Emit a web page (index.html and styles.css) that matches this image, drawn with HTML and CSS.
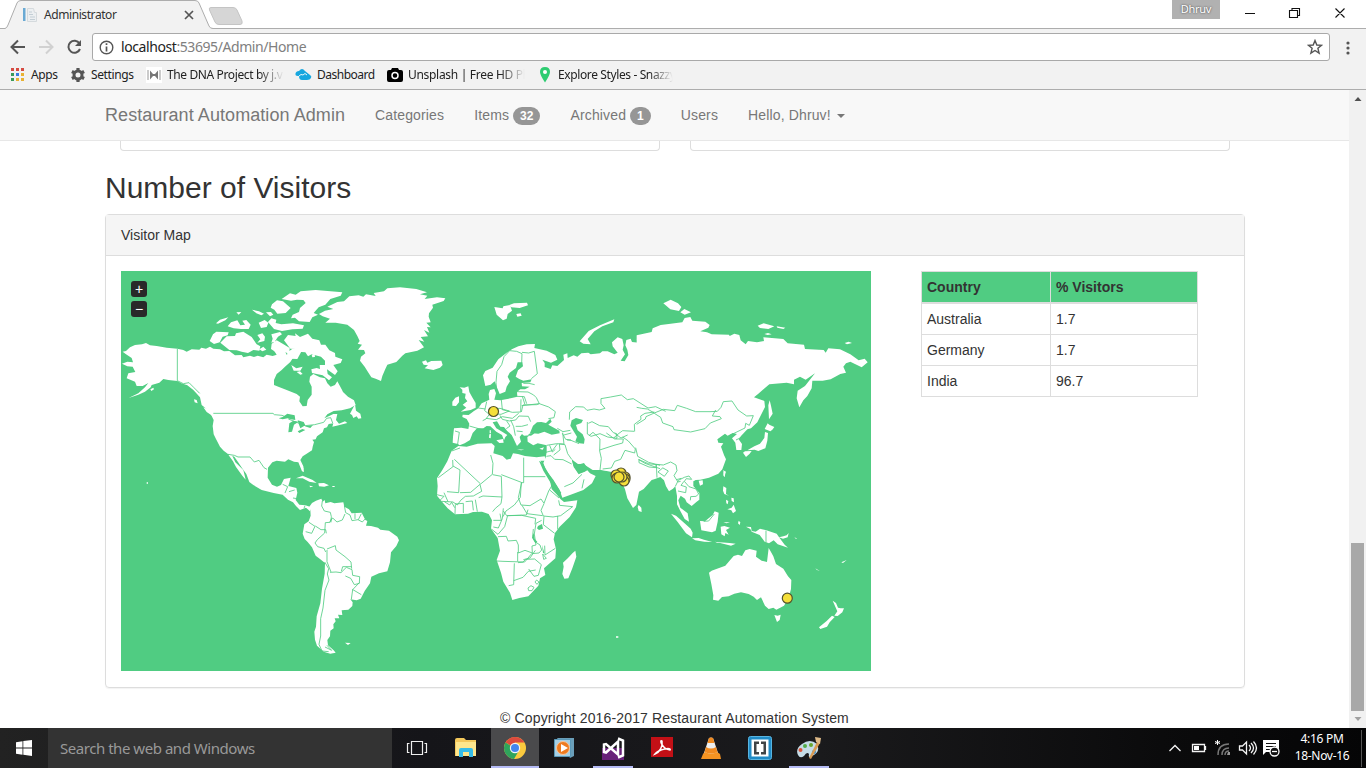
FILE: index.html
```html
<!DOCTYPE html>
<html lang="en">
<head>
<meta charset="utf-8">
<title>Administrator</title>
<link rel="stylesheet" href="styles.css">
</head>
<body>
<header class="browser">
  <div class="titlebar">
    <svg class="tab-shape" width="250" height="30" viewBox="0 0 250 30"><path d="M0 28.5H5Q7 28 8 25L17 3Q18 .5 21 .5H195Q198 .5 199 3L209 26Q210 28.5 213 28.5H250V30H0Z" fill="#f2f2f2"/><path d="M0 28.5H5Q7 28 8 25L17 3Q18 .5 21 .5H195Q198 .5 199 3L209 26Q210 28.5 213 28.5H250" fill="none" stroke="#adadad"/><path d="M211 7.500H233Q236 7.500 237 10L242 21Q243 24.500 240 24.500H219Q216 24.500 215 22L209.500 10Q208.500 7.500 211 7.500Z" fill="#d6d6d6" stroke="#c4c4c4"/></svg>
    <div class="tab"><svg width="16" height="16" viewBox="0 0 16 16"><path d="M1 1h2.500v13H1z" fill="#6aaad4"/><path d="M5.500 1.500h6l1 4h2v9h-9z" fill="#eceff1" stroke="#d5dadd"/><path d="M7 5h3M7 7.500h4M8 10h5M8 12.500h5" stroke="#c3ced5"/></svg><span class="tab-name">Administrator</span><svg class="tab-x" width="10" height="10" viewBox="0 0 10 10"><path d="M1 1l8 8M9 1L1 9" stroke="#555" stroke-width="1.700"/></svg></div>
    <div class="user">Dhruv</div>
    <div class="winbtns"><svg width="120" height="26" viewBox="0 0 120 26"><path d="M9 13.500h10M53.500 10.500h8v7h-8zM56 10V8.500h7.500v7H62M99.500 8.500l9 9M108.500 8.500l-9 9" fill="none" stroke="#111" stroke-width="1.100"/></svg></div>
  </div>
  <div class="toolbar">
    <svg class="navicons" width="92" height="32" viewBox="0 0 92 32"><g fill="none" stroke="#555" stroke-width="2"><path d="M25 18H12M18 11.500L11.500 18l6.500 6.500"/><path stroke="#d1d1d1" d="M39 18h13M46 11.500l6.500 6.500-6.500 6.500"/><path d="M79.500 14.500A6 6 0 1 0 80 20"/></g><path d="M81 11v6h-6z" fill="#555"/></svg>
    <div class="address"><svg width="15" height="15" viewBox="0 0 15 15"><circle cx="7.500" cy="7.500" r="6.300" fill="none" stroke="#555" stroke-width="1.400"/><path d="M7.500 3.200v1.800M7.500 6.500v5" stroke="#555" stroke-width="1.700"/></svg><span class="url">localhost<i>:53695/Admin/Home</i></span><svg class="star" width="16" height="16" viewBox="0 0 16 16"><path d="M8 1.500l1.800 4.500 4.800.3-3.700 3 1.200 4.800L8 11.500l-4.100 2.600 1.200-4.800-3.700-3L6.200 6z" fill="none" stroke="#555" stroke-width="1.400"/></svg></div>
    <svg class="dots" width="4" height="14" viewBox="0 0 4 14"><g fill="#555"><circle cx="2" cy="2" r="1.600"/><circle cx="2" cy="7" r="1.600"/><circle cx="2" cy="12" r="1.600"/></g></svg>
  </div>
  <div class="bookmarks">
    <span class="bm b1"><svg width="14" height="14" viewBox="0 0 14 14"><path d="M0 0h3v3H0zM5 0h3v3H5zM10 0h3v3h-3z" fill="#d64b42"/><path d="M0 5h3v3H0zM0 10h3v3H0z" fill="#3b9b5a"/><path d="M5 5h3v3H5z" fill="#3c7de0"/><path d="M5 10h3v3H5zM10 5h3v3h-3zM10 10h3v3h-3z" fill="#e9b233"/></svg><em>Apps</em></span>
    <span class="bm b2"><svg width="16" height="16" viewBox="0 0 16 16"><circle cx="8" cy="8" r="4" fill="none" stroke="#555" stroke-width="3"/><g stroke="#555" stroke-width="3.200"><path d="M8 1v2.500M8 12.500V15M1.900 4.500l2.200 1.200M11.900 10.300l2.200 1.200M1.900 11.500l2.200-1.200M11.900 5.700l2.200-1.200"/></g></svg><em>Settings</em></span>
    <span class="bm b3 fade"><svg width="16" height="16" viewBox="0 0 16 16"><path d="M0 0h16v16H0z" fill="#fff"/><path d="M2 3v10M14 3v10" stroke="#bbb" stroke-width="1.500"/><path d="M4 3.500l3 3.500h2l3-3.500v9L9 9H7l-3 3.500z" fill="#777"/></svg><em>The DNA Project by j.v</em></span>
    <span class="bm b4"><svg width="17" height="16" viewBox="0 0 17 16"><path d="M3 9Q0 9 .5 6.500Q1 4 4 4Q7 0 10 4L15 8Q17 9 16 11Q15 13 12 13H7Q4 13 4 9Z" fill="#16a7df"/><path d="M4 9Q6 6.500 8 8Q10 5 12 8" stroke="#e8f6fb" fill="none"/></svg><em>Dashboard</em></span>
    <span class="bm b5 fade"><svg width="16" height="16" viewBox="0 0 16 16"><path d="M4 3l1-2h6l1 2h2q2 0 2 2v8q0 2-2 2H2q-2 0-2-2V5q0-2 2-2z"/><circle cx="8" cy="8.500" r="3" fill="none" stroke="#fff" stroke-width="1.500"/></svg><em>Unsplash | Free HD Ph</em></span>
    <span class="bm b6 fade"><svg width="12" height="16" viewBox="0 0 12 16"><path d="M6 0Q11 0 11 5Q11 8 6 15.500Q1 8 1 5Q1 0 6 0Z" fill="#2ecc71"/><circle cx="6" cy="5" r="2" fill="#fff"/></svg><em>Explore Styles - Snazzy</em></span>
  </div>
</header>
<div class="viewport">
  <div class="page">
    <nav class="navbar"><div class="container nav-inner"><a class="brand">Restaurant Automation Admin</a><a>Categories</a><a>Items <span class="badge">32</span></a><a>Archived <span class="badge">1</span></a><a>Users</a><a>Hello, Dhruv! <b class="caret"></b></a></div></nav>
    <main class="container">
      <div class="previous"><div></div><div></div></div>
      <h2>Number of Visitors</h2>
      <section class="panel">
        <div class="panel-heading">Visitor Map</div>
        <div class="panel-body">
          <div class="map">
<svg width="750" height="400" viewBox="121 271 750 400">
<g transform="scale(.333333)">
<!-- North America -->
<g transform="translate(360 810)" class="land">
<path d="M8 245L18 243 30 232 45 225 66 223 78 219 90 226 110 228 140 233 172 236 190 240 200 245 215 238 238 239 244 233 258 236 270 230 280 236 300 238 312 244 328 243 345 256 365 255 370 262 390 257 402 261 413 257 430 262 440 254 458 258 470 254 461 240 470 235 485 243 492 238 500 254 515 255 520 262 511 276 495 290 485 300 470 312 462 330 462 345 475 350 500 360 530 372 540 380 538 394 548 409 560 408 563 390 575 374 575 350 568 335 570 320 580 312 600 322 615 325 622 340 632 350 645 345 652 334 665 358 669 366 684 380 702 391 707 405 690 415 665 421 641 423 622 433 613 445 640 432 652 432 648 450 657 461 675 454 682 459 656 466 637 470 640 460 626 462 621 472 612 475 608 487 591 499 587 508 577 509 582 516 578 530 576 541 560 551 548 559 541 570 550 589 552 606 546 604 535 577 522 575 505 568 495 575 470 572 457 577 444 593 443 623 456 644 471 650 483 645 492 627 512 623 505 648 529 654 532 668 527 690 538 704 556 706 572 711 570 724 558 713 540 720 528 708 519 697 504 689 488 674 461 669 425 660 400 645 388 636 379 612 366 594 354 576 343 560 324 552 311 542 300 530 288 507 281 493 278 468 281 450 271 430 257 415 245 405 240 382 220 360 202 346 184 340 172 333 145 330 130 327 118 338 95 345 92 352 75 365 55 374 26 384 55 370 75 352 85 339 68 348 50 348 45 335 20 325 25 310 46 306 38 290 22 289 6 281 22 275 39 277 35 264 17 252Z"/>
<path d="M325 554L336 556 346 577 370 600 377 629 367 617 348 591 339 574ZM222 388l8 2 3 10-9-3zM250 412l28 11 12 14-8 4-22-15zM91 358l9-5 2 5-8 5zM690 431l15-28 3 19 13 9 3 14-9 1-5-7-10 5-4-9z"/>
<path d="M288 160L300 149 325 142 316 151 294 161ZM323 169L333 157 352 151 361 166 375 164 367 152 379 150 392 164 386 177 363 177 341 175ZM349 127l15-1-8 8zM396 119l21 5 15 7-8 5-15-6zM438 127l15-1 7 8-10 5zM416 158l18-8 11 8-5 13-17 3zM444 156l10-11 15 4-2 10 17 4 35-3 33 6-4 10-31 2-31 5-24-6zM456 103l15-12 18 3 23 20-15 15-25 2-9-12-11-6zM485 87l25-17 17 4 15-10 45-4 80 7-5 10-31 10-15 17-20 8-15 17 13 5-17 8-8 14-32-2-12-11-12 2 5-11 19-8 3-12 17-15-7-9-19-1-18 3zM269 213l10-20 10-8 37 2-3 9-15 4-9 17-17 5zM301 218l19-19 25-1 3-8 22-5 25 16 15 22 11 6-3 13-18-2-16 9-19-4-15-4-22-1zM412 195l15-5 8 10-2 13-21 5 9-10zM418 238l12-8 9 9-12 5zM454 193l26-7 6 7-12 7-10 15-10 3 4-12zM455 221l15-10 18 10 21 13-1 17-15-5-8 13-17-12-15-10zM492 211l12-16 23 3-2-8 15 11 24-10 13 15 21 5 5 13 13 0 12 17 17 8 1 11 21 8-5 11-22 6 13 19-8 11-24-17 2 14 13 10-9 9-19-15-32-7-2-11 16-4 10 3-1-12 16 0 0-13-12-12-28-7-11 6-8-12-21-2-9-8-15-1zM511 241l10-7 22 4 0 9-11 20-20-1-12-14zM514 285l15 10 19-5-7 12-20 0zM530 306l10-2 8 8-7 2zM575 254l9 0 1 7-8 1z"/>
<g class="water"><path d="M476 445L488 441 502 431 524 436 526 450 512 448 503 445 488 448ZM505 487L508 460 520 452 535 455 529 460 522 464 516 485ZM533 451L551 456 556 466 541 475 537 464ZM533 484L547 477 556 480 538 489ZM554 469l25-4-8 9z"/></g>
<path class="border" d="M172 237V332L190 341 207 338 222 353 239 370M280 430H459L463 434 486 436 500 442M505 447L530 457 555 467 584 464 611 457 620 445 632 443 638 459M324 553L343 556 354 561H390L403 576 417 571 432 593 441 598M488 643l15 7-8 19M507 665l17-5M519 684l12 2M555 707l-3 8"/>
</g>
<!-- Greenland, Iceland and Svalbard -->
<g class="land" transform="translate(870 810)"><path d="M87 132L105 122 130 117 112 110 142 96 162 94 178 79 206 76 220 80 228 73 257 78 251 69 282 64 292 55 330 52 379 57 411 67 390 73 412 77 404 87 441 82 466 85 461 93 427 104 429 113 417 130 416 140 422 157 409 158 422 172 411 171 418 188 402 180 414 199 392 201 403 215 386 210 402 232 382 242 346 250 337 257 319 276 292 284 285 299 277 318 273 333 257 326 244 322 232 303 224 290 210 272 213 260 226 250 222 240 204 239 216 224 203 221 209 213 202 198 192 180 172 164 137 158 106 158 120 146 98 139ZM396 275l12-4 4 7 12-5 30-1 4 13-8 8-20 7-26-5 10-9-13-2zM613 111l25 4 2-6 20-4 6 17-13 10-3 14-11 5-19-17zM658 105l14-5 39-2 3 8-25 8-25-2zM679 132l13-2 3 7-13 3z"/></g>
<!-- South America, Africa -->
<g transform="translate(870 1380)">
<path class="land" d="M58 140L66 129 78 122 94 116 98 125 104 120 106 130 122 126 133 130 160 127 163 140 177 148 185 160 215 158 226 180 232 183 228 197 243 198 264 203 271 209 297 212 322 230 327 241 319 258 303 277 300 307 292 334 267 340 244 350 240 370 224 393 212 416 200 421 181 418 188 427 187 438 175 449 155 451 157 465 144 464 148 475 134 475 137 484 130 493 131 505 121 512 120 529 112 540 114 556 131 571 137 578 121 581 101 575 81 557 75 539 73 515 78 500 80 469 91 430 96 386 104 341 105 309 90 297 77 287 66 262 53 246 44 237 38 221 43 193 56 184 62 167 61 151Z"/>
<path class="land" d="M18 55l20-8 30 13 12 9-22-4-20-10zM85 70l17-1 15 7-14 4-16-1zM58 77l12 2-9 3zM127 78h7v3h-7zM165 548l17 1-8 6zM35 12l7 18-6-9z"/>
<path class="border" d="M97 123l-2 15 8 15 18 4 3 13-1 17M124 175l-4 12-14 1-2 31-22 20-7 10 8 11 19 5 5 11M47 215l18 5 10-21-18-12M76 198l17 11 14 0 2 11M163 137l4 21 13 7 6 17 18-3 13 7 12-13M195 160v17M214 161l-9 18M165 162l-8 18-16 6-13-12-8 11M111 270v35l12 31M111 267l25-10 2 13 27 20 18 16 2 20M104 306l12 20-4 16 5 18-12 31-6 53-7 32 0 52-5 25 9 20 20 2M120 337l18-1 15 2 16-16 17 7 2 17 21 4-1 20-15 4-11-19-16-7M154 334l4-14 26 0M208 368l-20 21-4 29M187 388l27 16M111 556l14 15-20-10"/>
<path class="land" d="M485-28L505-42 530-40 563-49 605-50 614-42 610-20 638-12 650-1 662-4 669-20 684-18 705-12 740-8 764-11 769 2 751 2 763 25 779 57 785 87 799 102 812 118 822 126 862 121 858 142 839 171 809 200 795 219 791 238 798 268 796 295 762 325 766 345 750 355 745 377 715 409 688 414 667 420 660 398 640 365 633 338 620 300 630 272 623 234 603 206 606 181 596 162 576 155 549 156 534 161 495 163 473 145 456 125 441 107 443 78 441 55 457 30 472 4ZM856 272l3 18-12 35-12 30-12 1-6-14 4-22-2-12 15-14 14-15z"/>
<path class="border" d="M485-27L510-36M488 0L489 20 445 53M493-2L572 72 607 43 609 10 602-15M489 18l21 12-4 68-35-3M510 98l32-1 28-24 5 21-25 14-24 1-14 12-10 14-13-9-35-2M440 104l22 5-11 11M462 98l12 27M463 125l16 10 6-8 9 16M496 134l-1 28M495 132l25-2v29M527 125l20-2 3 28M556 119l6 36M566 113l13-5 57 3-3 20-17 14-8 10M636 111l-2-62-26-5M634 44l60 23-3 45-18 23-25 18-9 17M701-7V50H766M701 50V68h-7M695 67l-10 46 8 22 27 2 33-20 9 13 14-37 9-15M779 90l28 24M806 121l3 15 39 4-36 27-23 4-29-3-7-17 9-20M696 136l15 25 47 6M640 153l10 14 59-2 5-16M640 145l-3 31-12 28-15-3M610 181h24l-4-20M604 207l20 16 20-23 9-34M624 230l25-1 5 14 25-2 6 14v24l20-8 22 8-1-21 12-3-5-33 5-32 17-9M654 167l41-1 42 9-2 18M730 207l-2 22 7 16 15 10 5 15-8 9-22 2-21 25-20 2M764 257l1 28 31-20M762 169l-2 25 34 26M803 168v40M620 303l19 1 60 2 8-8 27-1 20 17-9 32-13 3-16-22M683 304V276M673 310l-2 64-15 3M671 362l28-10 16-18 22-4M700 299l20-5 16-23M740 360l7 6-6 7-6-7zM714 384l9-7 9 5-6 10-10 0zM758 282l11 13-8 3z"/>
<path class="water" d="M744 198l12-6 3 14-12 4-6-5zM731 218l3 19 8 8-6 5-10-17zM756 254l7 25-4 1z"/>
</g>
<!-- Eastern Asia -->
<g transform="translate(1920 870)" class="land">
<path d="M-10 136L35 126 38 115 62 105 92 101 115 98 127 97 134 84 151 81 157 92 196 95 209 105 205 113 181 124 201 127 215 133 267 134 269 138 283 131 298 135 302 151 317 163 324 153 351 157 372 153 370 142 430 147 443 160 492 164 495 177 551 180 557 188 565 175 600 178 631 193 656 211 674 206 683 217 665 232 631 215 618 220 610 230 618 248 601 252 572 268 548 272 517 272 515 295 502 318 490 331 478 352 470 325 473 302 495 288 525 250 497 269 480 260 462 269 462 283 440 278 388 283 355 311 342 322 365 330 373 333 375 351 352 397 333 415 322 418 303 438 296 448 306 462 304 480 289 480 286 458 276 445 291 432 278 429 256 441 263 437 255 431 232 448 235 458 250 460 243 470 252 495 258 508 247 538 235 551 207 563 181 569 165 570 150 575 95 560 70 550 -10 555Z"/>
<path d="M70 40L92 29 114 40 124 51 117 63 91 58ZM121 67l12-10 20 10-19 7zM353 107l18-7 32 9-18 8-25-3zM410 109l26 4-6 4-18-4zM373 132l11-3 11 4-12 2zM614 159l12-4 10 4-15 4zM674 240l7 1M389 331l-4 15 2 42 11-17-5-24zM383 400l5 4 15 7-6 8-6 5-17-7zM375 426l9 3-2 23-6 23-21 8-11-4-22 2 21-12 17-8 13-17zM315 484l20-1-6 8-11 10-9-13zM176 572l12-1 1 12-9 4zM251 545l6-1-3 18-4-6z"/>
</g>
<!-- South-east Asia and Oceania -->
<g transform="translate(1800 1350)" class="land">
<path d="M-10 57L35 66 35 85 63 90 75 118 82 145 99 174 109 165 117 125 131 117 155 90 165 87 181 81 192 91 198 109 207 124 219 116 226 109 231 138 231 163 241 183 254 207 267 215 263 190 241 173 235 151 242 137 255 146 260 157 275 168 290 155 298 149 298 129 280 108 280 94 294 86 300 60 290 40 -10 0Z"/>
<path d="M116 165l8 8 1 13-9-3-3-12zM213 191l15 6 24 21 20 18 6 12-2 14-18-12-25-34zM276 265l20-1 16 5 25 7-24-1-27-4zM300 213l15 1 23-19 6-11 12 4-3 27-6 27-11 5-32-6zM362 230l11-2 17 5-12 7 8 14-10-5-2 10-10-6zM370 109l9 5-1 18 9 5-14-5-4-10zM382 178l13-5 6-9 7 19-9 7-5-9zM394 143l7 2 1 12-7-4zM378 149l7 4-2 10-4-3zM349 276l40 3 18 2-14 6M345 275l20 4-14-1zM416 212l5 5-2 8-5-5zM370 217l20 0-10 3zM438 230l15 1 2 12 12 2 13-9 19 5 31 10 11 16 13 17 10 9-31-10-12-12-14 9-13-5-15-20-24-10-4-8zM537 262l13-3 10-3 6-7-3 13-14 4zM583 261l8 5-3 1zM370 60l7 6-5 15zM646 355l14 9-10-5zM724 337l16-7-11 9zM48 559h7v4h-7z"/>
<path d="M327 368L335 362 349 357 376 347 390 331 401 318 414 314 426 318 436 301 449 297 470 302 468 320 485 332 501 336 506 294 513 306 520 319 528 342 550 356 564 379 574 390 573 417 566 443 552 467 529 479 520 473 506 477 495 467 483 442 471 450 461 440 446 432 423 427 403 431 386 439 366 441 355 452 339 449 340 436 334 402ZM523 495l10 2 9-3-3 16-8 6zM698 452l10 7 6 14 8 2 10 0-5 12-14 11-10-1 9-13zM696 497l8 4-15 16-8 13-20 7-4-5 23-19z"/>
</g>
<!-- Western half of Eurasia -->
<g transform="translate(1290 960)">
<path class="land" d="M159 166L166 153 188 143 205 118 230 98 247 87 265 79 290 73 315 72 313 84 350 92 376 105 382 119 363 128 337 119 344 129 344 141 362 147 367 136 382 138 402 120 400 104 412 100 413 114 431 106 442 110 454 100 475 98 482 103 510 100 517 94 533 94 553 103 563 98 548 79 546 67 563 52 577 57 581 76 578 89 585 103 572 122 584 124 595 105 592 89 586 76 589 60 602 56 606 66 627 68 620 57 640 46 672 43 675 34 720 28V455L600 490 545 468 545 453 512 450 488 450 460 432 444 432 426 419 430 436 445 460 463 456 472 451 480 460 497 468 486 490 460 510 420 525 397 533 389 510 370 479 347 449 340 429 347 413 350 396 350 376 323 370 310 376 293 365 292 351 300 346 282 347 276 342 269 351 273 365 261 378 250 355 245 345 231 332 222 321 211 320 201 304 188 307 199 325 219 337 232 345 226 351 222 361 216 345 199 335 181 319 170 318 160 325 141 325 128 339 120 360 104 370 89 376 84 372 68 368 69 351 72 325 94 323 115 327 118 311 110 297 97 291 98 284 116 285 132 273 145 265 155 250 170 243 178 239 176 222 180 210 193 207 198 220 193 239 211 241 242 235 262 230 261 216 271 208 285 208 299 200 276 199 275 189 301 187 305 178 280 182 268 177 257 170 264 151 279 139 277 127 263 127 258 144 239 158 233 170 240 184 230 200 226 215 209 222 200 200 194 184 182 194 166 198Z"/>
<path class="land" d="M103 203l12-4 3 17 10 18 9 15 0 14-15 7-30 5 17-12-11-9 14-10-7-10 2-13-10-2 0-10-8-7zM76 233l11-4 0 18-9 11-11-1 0-12zM449 64l27-31 34-17 43-18-3 9-33 12-24 15-20 23 9 16-22-2zM199 361l20-4 2 11-13 1zM178 343l5-1-1 13-5-2zM179 331l3-1 1 10-4 0zM261 388l22 1-10 2zM328 386l14-4-4 7z"/>
<g class="water"><path d="M300 339L309 317 321 307 334 306 348 309 361 296 365 305 355 314 388 332 389 340 365 344 343 335 325 341ZM425 301L438 294 459 300 454 309 438 315 443 331 458 343 464 358 462 371 448 370 436 364 441 350 430 332 421 317ZM293 346l9-8 12 2-11 7z"/><path d="M327 422l11 8 19 33 37 56-7 5-18-24-29-48zM425 417l16 18 21-6 10 15-11 12-15 7-15-22z"/></g>
<path class="border" d="M201 222L198 187 201 154 215 134 222 110 239 92 260 94 276 101 275 130M276 97l20 2 17-5 9 67-18 15M280 190h17l17 4M260 215l34 1 17 9 8 8 9 18-53 6M261 229l22 1 7 21M214 239l3 30 30 8 25-1 1-38M170 245l-6 27 14 11-10 14-10 5M145 264l21 3M178 267l32-2 28 8-25 10-22-2M168 295l31 4 18-9 30 5 19-15M210 286l7 12 21 5 19-3 10-12 28 1 7 16M230 303l10 15-11 8M242 300l9 20 5 27M257 319l18 0 19-5M260 333l18 2M274 276l5-21 41-1 8-3 28 10 20 14-4 18-17 3M75 333l13 4-5 35M118 318l35 10M285 254l-8-25M382 325l17 10 22-4M397 340l10 18 16 2M402 345l22-6M350 376l30-5 22 1-4-34M347 397l20-5 15-20M359 376l8 20 9-8M349 409l14-2 11 11 25 1 26 13M371 405l19-15-2-18 17 2 8 27 12 17M456 463l-27 26-26 11M462 478l-6 27M411 360l12 1 24 10M475 310l11-5 23 12 26 3 15 18 10 3 1 14-28-4-23-10-27 8-11-7 0-36M419 276l18-16 24 1 10 10 21-4 16 3 17-5-12-14 0-15 29-5 32-6 18 14 18-3 44 28 23-4 30 14M419 276l-1 23M477 347l12-10 21 20-1 36 5 22-4 35M509 390l43-14 26-7 2-12-26 0-25-18M552 353l15-13 11-8 35 2M554 340l19 14 20-9M578 351l17 12 21 24-2 12-29-8-13 27-18 6-10 20-26 3M614 334l-1-21 20-15-1-10 13-8 28-4M617 383l6 26 33 18 34 9M625 418l20 12 45 16"/>
</g>
<!-- Borders of the eastern countries -->
<g transform="translate(1920 870)"><path class="border" d="M-10 352L5 355 22 357 43 369 70 358 104 362 112 346 140 355 167 365 210 365 232 364 243 352 250 335 276 333 294 360 320 378 340 377 328 406 317 400 315 414 282 430 267 438M43 369L18 380 16 387 -10 403M43 370L62 382 68 399 99 410 102 419 152 426 195 416 211 399 244 386 240 380 217 378 227 360M288 450l14-7"/></g>
<g transform="translate(1800 1350)"><path class="border" d="M117 29l28 12 24 3M117 29l0 9 30 13 20 2 2-10 21 2 22-9 16 9 3 17-9 15 12 19 8-2M169 44l2 39M189 53l-15 13 19 13 12-16-16-9M226 109l9-18 18-9 14-4 8 10-16-2-6 8 14 16 21 7 8 15-8 7-16 1-1 11M244 85l-15 4M252 94l-9 12 16 5-2 17-23-5M311 214l15-1 17-21M498 242v36"/></g>
</g>
<g class="markers"><circle cx="493.500" cy="411.500" r="5"/><circle cx="787.300" cy="598.200" r="5"/><circle cx="621" cy="473" r="5"/><circle cx="616" cy="475" r="5"/><circle cx="625" cy="477" r="5"/><circle cx="617" cy="478" r="5"/><circle cx="625" cy="479" r="5"/><circle cx="624" cy="481" r="5"/><circle cx="622" cy="477" r="5"/><circle cx="619" cy="477" r="5"/></g>
<path d="M146 483l2 1v-2z" fill="#fff"/>
</svg>
            <div class="zoomers"><span>+</span><span>−</span></div>
          </div>
          <table><thead><tr><th>Country</th><th>% Visitors</th></tr></thead><tbody><tr><td>Australia</td><td>1.7</td></tr><tr><td>Germany</td><td>1.7</td></tr><tr><td>India</td><td>96.7</td></tr></tbody></table>
        </div>
      </section>
      <footer>© Copyright 2016-2017 Restaurant Automation System</footer>
    </main>
  </div>
  <aside class="scroll"><svg width="10" height="6" viewBox="0 0 10 6"><path d="M1.500 5L5 1l3.500 4z" fill="#505050"/></svg><i></i><svg width="10" height="6" viewBox="0 0 10 6"><path d="M1.500 1L5 5l3.500-4z" fill="#a0a0a0"/></svg></aside>
</div>
<div class="taskbar">
  <div class="start"><svg width="16" height="16" viewBox="0 0 16 16" fill="#fff"><path d="M0 2.200l6.500-.9v6.300H0zM7.300 1.100L16 0v7.600H7.300zM0 8.400h6.500v6.300L0 13.800zM7.300 8.400H16V16l-8.700-1.200z"/></svg></div>
  <div class="search">Search the web and Windows</div>
  <div class="apps">
    <span><svg width="22" height="16" viewBox="0 0 22 16"><path d="M5.500 1.500h11v13h-11zM3.500 3.500h-2v9h2M18.500 3.500h2v9h-2" fill="none" stroke="#eee" stroke-width="1.200"/></svg></span>
    <span><svg width="24" height="24" viewBox="0 0 24 24"><path d="M1 4q0-2 2-2h7l2 2h10v16H1z" fill="#f3c85c"/><path d="M2 6h20v14H2z" fill="#fde68d"/><path d="M5 21v-7q0-2 2-2h10q2 0 2 2v7h-4v-5H9v5z" fill="#36bce8"/></svg></span>
    <span class="active wide"><svg width="24" height="24" viewBox="0 0 24 24"><circle cx="12" cy="12" r="11" fill="#fbca3e"/><path d="M12 12L2.500 6.500A11 11 0 0 1 21.500 6.500H12z" fill="#dc4b3e"/><path d="M2.500 6.500A11 11 0 0 0 11 23l5-8.500-4-2z" fill="#2fa45c"/><circle cx="12" cy="12" r="5.200" fill="#f4f4f4"/><circle cx="12" cy="12" r="4" fill="#4286ee"/></svg></span>
    <span><svg width="24" height="24" viewBox="0 0 24 24"><path d="M5 2h17v18l-4 2z" fill="#6a9eb9"/><path d="M2.500 3.500h16v17h-16z" fill="#a6d0e5" stroke="#5998b8"/><circle cx="11" cy="12" r="6.500" fill="#ee7b20" stroke="#f8c69b"/><path d="M9 8l7 4-7 4z" fill="#fff"/></svg></span>
    <span class="active"><svg width="24" height="24" viewBox="0 0 24 24"><path d="M1 12h22v12H1z" fill="#68217a"/><path d="M3 8.500v7.500l2 .5L17 5.500v13L5 8zM17 2.500l5 2v15l-5 2" fill="none" stroke="#fff" stroke-width="2.500"/></svg></span>
    <span><svg width="24" height="24" viewBox="0 0 24 24"><path d="M1 1h22v20H1z" fill="#c31016"/><path d="M5 18c5-2 8-8 7-13-3-2 0 8 8 9 2-3-11-1-15 4z" fill="none" stroke="#fff" stroke-width="1.500"/></svg></span>
    <span><svg width="24" height="24" viewBox="0 0 24 24"><path d="M10 2q2-1 4 0l6 18H4z" fill="#eee"/><path d="M10 2q2-1 4 0l1.500 5h-7zM7 11q5 3 10 0l1.500 5q-6 3-13 0z" fill="#f08a20"/><path d="M4 18l2-2q6 3 12 0l3 2 1 5H2z" fill="#f49322"/></svg></span>
    <span><svg width="24" height="24" viewBox="0 0 24 24"><rect x=".5" y=".5" width="23" height="23" rx="2" fill="#208bc6" stroke="#58b4e0"/><path d="M3.500 3.500h17v17h-17z" fill="#fff"/><path d="M11 5.500H6v13h5v-2.500H8.500V8H11zM13 5.500h5v13h-5v-2.500h2.500V8H13z" fill="#404446"/></svg></span>
    <span class="active"><svg width="26" height="24" viewBox="0 0 26 24"><path d="M2 19Q-1 13 6 8Q14 2 21 8Q25 16 16 20Q12 23 13 18Q11 15 8 20Q4 23 2 19Z" fill="#c5dce7"/><circle cx="4.500" cy="14" r="2" fill="#db553a"/><circle cx="9" cy="10" r="2" fill="#53ad48"/><circle cx="15" cy="9" r="2" fill="#68a62f"/><circle cx="18" cy="16" r="2" fill="#338acd"/><path d="M13 22L21 6l3 1-9 16z" fill="#d89b55"/><path d="M20 6l-1-5 6 1-1 6z" fill="#dfbb89"/></svg></span>
  </div>
  <div class="tray"><svg width="120" height="24" viewBox="0 0 120 24"><g fill="none" stroke="#f3f3f3" stroke-width="1.300"><path d="M4.500 15l5.500-5.500 5.500 5.500M27.500 8.500h12v7h-12zM40.500 10v4M74.500 10h3l4-4v12l-4-4h-3zM84 9q3 3 0 6M86 7q5 5 0 10M88.500 5.500q6 6.500 0 13"/><path d="M53 19q0-11 11-11M57 19q0-7 7-7M60 19q0-4 4-4" stroke="#777" stroke-width="1.500"/></g><path d="M29 10h5v4h-5zM98 4h16v12H98z" fill="#fff"/><path d="M63 16h2v3h-3z" fill="#999"/><path d="M52.500 4v5M50 5.500l5 2M50 7.500l5-2" stroke="#fff"/><path d="M101 7.500h10M101 10.500h10M101 13.500h5" stroke="#111"/><path d="M98 16v3l3-3z" fill="#fff"/><circle cx="109.500" cy="15.500" r="4.500" fill="#111" stroke="#fff" stroke-width="1.300"/><path d="M107 15.500h5" stroke="#fff" stroke-width="1.300"/></svg><time>4:16 PM<br>18-Nov-16</time></div>
</div>
</body>
</html>
```
FILE: styles.css
```css
* { box-sizing: border-box; }
body { margin: 0; width: 1366px; height: 768px; overflow: hidden; background: #fff; font: 14px/20px "Liberation Sans", Arial, sans-serif; color: #333; display: flex; flex-direction: column; }
svg { display: block; flex: none; }
.browser { height: 90px; background: #f2f2f2; border-bottom: 1px solid #adadad; font-family: "Noto Sans", sans-serif; flex: none; }
.titlebar { height: 29px; background: #fff; border-bottom: 1px solid #adadad; display: flex; position: relative; }
.tab-shape { position: absolute; left: 0; top: 0; }
.tab { position: relative; display: flex; align-items: center; width: 194px; margin-left: 22px; margin-right: auto; height: 30px; }
.tab-name { margin-left: 6px; font-size: 12px; color: #333; letter-spacing: -.42px; }
.tab-x { margin-left: auto; margin-right: 22px; }
.user { background: #b1b1b1; color: #fff; text-shadow: 0 0 2px #333; width: 48px; height: 19px; font-size: 11px; letter-spacing: -.3px; text-align: center; line-height: 18px; margin-right: 16px; }
.winbtns { width: 130px; }
.toolbar { display: flex; height: 34px; }
.address { width: 1238px; height: 28px; margin-top: 4px; background: #fff; border: 1px solid #a9a9a9; border-radius: 3px; display: flex; align-items: center; padding: 0 6px; }
.url { font-size: 14px; margin-left: 7px; letter-spacing: -.42px; color: #222; }
.url i { font-style: normal; color: #808080; }
.star { margin-left: auto; }
.dots { margin: 12px 0 0 16px; }
.bookmarks { height: 26px; position: relative; display: flex; align-items: center; padding-left: 11px; }
.bm { display: flex; align-items: center; overflow: hidden; white-space: nowrap; font-size: 12px; color: #222; letter-spacing: -.38px; flex: none; height: 22px; margin-top: -2px; }
.bm em { font-style: normal; margin-left: 5px; }
.b1 { width: 59px; }
.b1 em { margin-left: 6px; }
.b2 { width: 76px; }
.b3 { width: 138px; margin-right: 11px; }
.b4 { width: 92px; letter-spacing: -.5px; }
.b5 { width: 138px; margin-right: 14px; letter-spacing: -.3px; }
.b6 { width: 134px; }
.b6 em { margin-left: 7px; }
.fade { -webkit-mask-image: linear-gradient(90deg, #000 82%, transparent 100%); mask-image: linear-gradient(90deg, #000 82%, transparent 100%); }
.viewport { height: 638px; display: flex; flex: none; }
.page { width: 1349px; overflow: hidden; }
.container { width: 1140px; margin: 0 0 0 105px; }
.navbar { height: 51px; background: #f8f8f8; border-bottom: 1px solid #e7e7e7; }
.nav-inner { display: flex; color: #777; letter-spacing: .14px; }
.nav-inner a { padding: 15px; white-space: nowrap; }
.nav-inner .brand { padding-left: 0; font-size: 18px; letter-spacing: .07px; }
.badge { display: inline-block; background: #969696; color: #fff; font-weight: bold; font-size: 12px; line-height: 12px; letter-spacing: 0; padding: 3px 7px; border-radius: 10px; vertical-align: middle; }
.caret { display: inline-block; border: 4px solid transparent; border-top-color: #777; border-bottom: 0; margin-left: 2px; vertical-align: middle; }
.previous { display: flex; gap: 30px; padding: 0 15px; }
.previous div { flex: 1; height: 10px; border: 1px solid #ddd; border-top: 0; border-radius: 0 0 4px 4px; }
h2 { font-weight: normal; font-size: 30px; line-height: 33px; margin: 20px 0 10px; }
.panel { height: 474px; border: 1px solid #ddd; border-radius: 4px; box-shadow: 0 1px 1px rgba(0,0,0,.05); }
.panel-heading { height: 41px; padding: 10px 15px; background: #f5f5f5; border-bottom: 1px solid #ddd; }
.panel-body { display: flex; align-items: flex-start; padding: 15px; }
.map { position: relative; width: 750px; height: 400px; background: #50cc82; overflow: hidden; }
.land { fill: #fff; }
.water { fill: #50cc82; }
.border { fill: none; stroke: #50cc82; stroke-width: 2.5; stroke-linejoin: round; }
.markers { fill: #f5df39; stroke: #55522c; stroke-width: 1.2; }
.zoomers { position: absolute; left: 10px; top: 10px; display: grid; gap: 4px; }
.zoomers span { width: 16px; height: 16px; border-radius: 3px; background: #292929; color: #fff; text-align: center; font-size: 14px; line-height: 16px; }
table { margin-left: 50px; width: 277px; border-collapse: collapse; table-layout: fixed; }
th, td { height: 31px; border: 1px solid #ddd; padding: 5px; text-align: left; line-height: 20px; }
th { background: #50cc82; border-bottom-width: 2px; }
th:first-child { width: 129px; }
footer { text-align: center; padding-top: 20px; margin-left: -1px; letter-spacing: .14px; }
.scroll { width: 17px; background: #f1f1f1; display: flex; flex-direction: column; align-items: center; padding: 6px 0; }
.scroll i { width: 13px; height: 168px; background: #a8a8a8; margin: auto 0 5px; }
.taskbar { height: 40px; background: linear-gradient(90deg, #222 0, #151519 31%, #1a1a1c 60%, #0b0b0c 85%, #050506); display: flex; font-family: "Noto Sans", sans-serif; color: #fff; flex: none; }
.start { width: 48px; padding: 12px 16px; }
.search { width: 344px; background: #333; color: #999; padding-left: 12px; line-height: 40px; font-size: 15px; letter-spacing: -.46px; white-space: nowrap; }
.apps { display: flex; gap: 1px; padding-left: 1px; }
.apps span { width: 48px; height: 40px; display: flex; align-items: center; justify-content: center; }
.apps .active { background: linear-gradient(#b5bbf5,#b5bbf5) center bottom / 40px 2px no-repeat; }
.apps .wide { background: #4a4a4c; border-bottom: 2px solid #b5bbf5; padding-top: 2px; }
.tray { margin-left: auto; display: flex; align-items: center; font-size: 12px; letter-spacing: -.3px; }
.tray svg { margin-right: -1px; }
.tray time { width: 78px; text-align: center; line-height: 17px; border-right: 1px solid #555; margin-right: 4px; padding: 0 1px 3px 0; white-space: nowrap; }
```
